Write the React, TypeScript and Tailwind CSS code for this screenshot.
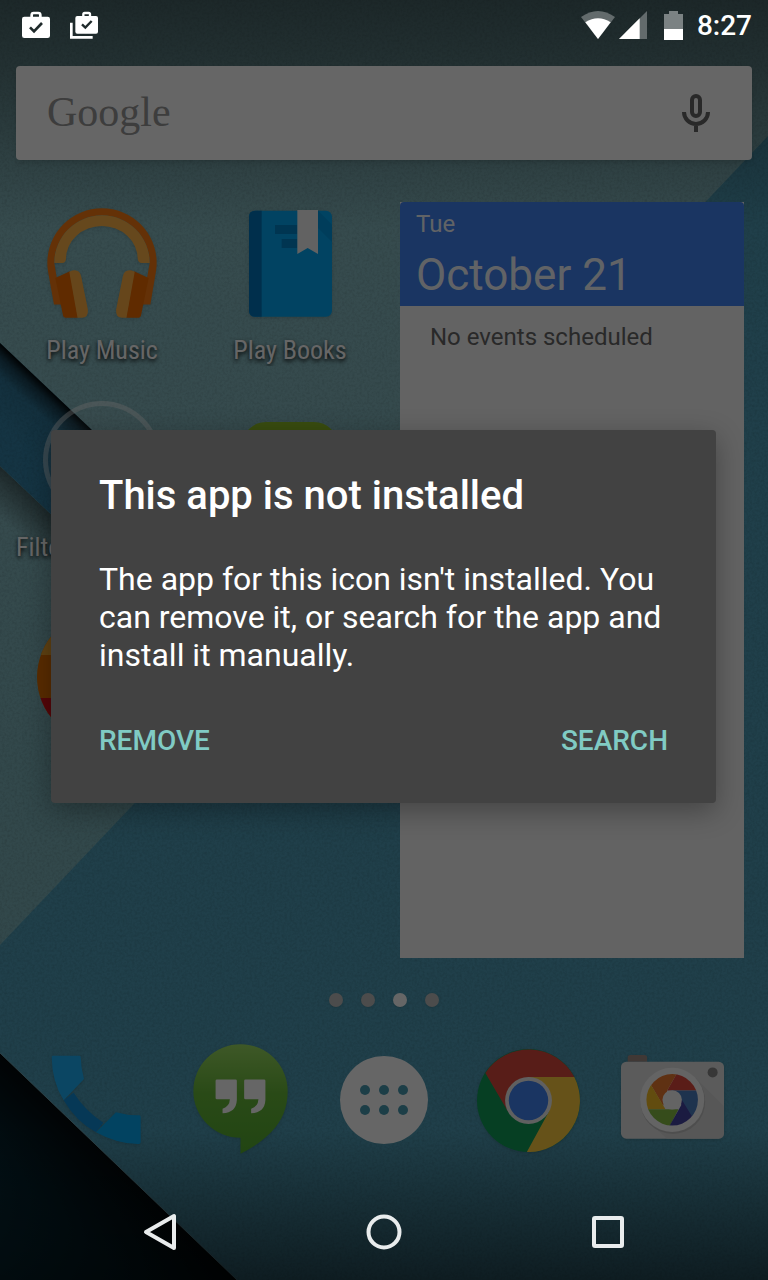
import { useState, type ReactNode } from "react";

function Wallpaper() {
  return (
    <svg
      className="absolute inset-0 h-full w-full"
      viewBox="0 0 768 1280"
      preserveAspectRatio="none"
      aria-hidden="true"
    >
      <defs>
        <linearGradient id="paper" x1="0" y1="0" x2="0.3" y2="1">
          <stop offset="0" stopColor="#8cc2c8" />
          <stop offset="0.5" stopColor="#87bac1" />
          <stop offset="0.75" stopColor="#7eb4bb" />
        </linearGradient>
        <linearGradient id="strip" gradientUnits="userSpaceOnUse" x1="0" y1="343" x2="-42" y2="388">
          <stop offset="0" stopColor="#000" stopOpacity="0.95" />
          <stop offset="0.15" stopColor="#000" stopOpacity="0.5" />
          <stop offset="0.4" stopColor="#000" stopOpacity="0.1" />
          <stop offset="1" stopColor="#000" stopOpacity="0" />
        </linearGradient>
        <linearGradient id="stripShadow" gradientUnits="userSpaceOnUse" x1="0" y1="466" x2="-26" y2="494">
          <stop offset="0" stopColor="#000" stopOpacity="0.45" />
          <stop offset="1" stopColor="#000" stopOpacity="0" />
        </linearGradient>
        <linearGradient id="corner" gradientUnits="userSpaceOnUse" x1="120" y1="1165" x2="10" y2="1280">
          <stop offset="0" stopColor="#03080b" />
          <stop offset="0.5" stopColor="#052632" />
          <stop offset="1" stopColor="#0a3d4e" />
        </linearGradient>
        <linearGradient id="topShade" x1="0" y1="0" x2="0" y2="1">
          <stop offset="0" stopColor="#000" stopOpacity="0.48" />
          <stop offset="0.3" stopColor="#000" stopOpacity="0.36" />
          <stop offset="1" stopColor="#000" stopOpacity="0" />
        </linearGradient>
        <linearGradient id="bottomShade" x1="0" y1="0" x2="0" y2="1">
          <stop offset="0" stopColor="#000" stopOpacity="0" />
          <stop offset="1" stopColor="#000" stopOpacity="0.54" />
        </linearGradient>
        <filter id="grain" x="0" y="0" width="100%" height="100%">
          <feTurbulence type="fractalNoise" baseFrequency="0.4" numOctaves="3" seed="4" />
          <feColorMatrix values="0 0 0 0 0  0 0 0 0 0  0 0 0 0 0  1.2 0 0 0 -0.45" />
        </filter>
      </defs>
      <rect width="768" height="1280" fill="#509eb8" />
      <path d="M0 0H768V136L0 945Z" fill="url(#paper)" />
      <path d="M0 466L300 750V800L0 520Z" fill="url(#stripShadow)" />
      <path d="M0 343L300 627V750L0 466Z" fill="#3583a8" />
      <path d="M0 343L300 627V750L0 466Z" fill="url(#strip)" />
      <rect width="768" height="1280" filter="url(#grain)" opacity="0.16" />
      <path d="M0 1053L237 1280H0Z" fill="url(#corner)" />
      <path d="M0 1053L237 1280" stroke="#7cb0bd" strokeWidth="1" opacity="0.8" />
      <rect width="768" height="230" fill="url(#topShade)" />
      <rect y="1130" width="768" height="150" fill="url(#bottomShade)" />
    </svg>
  );
}

function MusicIcon() {
  return (
    <svg className="h-28 w-28 drop-shadow" viewBox="0 0 337 336" aria-hidden="true">
      <path
        d="M24 290L6 190Q4 178 4 165A164.5 164.5 0 0 1 333 165Q333 178 331 190L314 290H290L312 165A143.5 143.5 0 0 0 25 165L46 290Z"
        fill="#f97c12"
      />
      <path
        d="M25 165A143.5 143.5 0 0 1 312 165H288Q278 165 276 153A108 99 0 0 0 60 153Q59 165 49 165Z"
        fill="#ffb449"
      />
      {[undefined, "translate(337 0) scale(-1 1)"].map((transform, i) => (
        <g key={i} transform={transform}>
          <path d="M28 210L72 190L96 330H62Q53 330 51 322Z" fill="#ef6c00" />
          <path d="M70 191Q100 178 106 206L126 305Q128 330 108 330H95Z" fill="#ffb044" />
        </g>
      ))}
    </svg>
  );
}

function BooksIcon() {
  return (
    <svg className="h-28 w-[86px] drop-shadow" viewBox="0 0 258 336" aria-hidden="true">
      <rect x="6" y="8" width="249" height="318" rx="18" fill="#03a9f4" />
      <path d="M44 8V326H24Q6 326 6 308V26Q6 8 24 8Z" fill="#0277bd" />
      <path d="M213 8L255 50V102L213 60Z" fill="#0288d1" opacity="0.5" />
      <path d="M84 51H151V78H84ZM104 93H151V120H104Z" fill="#0284cb" />
      <path d="M151 6H213V138L182 120L151 138Z" fill="#f5f5f5" />
    </svg>
  );
}

function PhoneIcon() {
  return (
    <svg className="h-[90px] w-[91px] drop-shadow" viewBox="0 0 273 270" aria-hidden="true">
      <path d="M38 136L68 113Q100 165 157 203L135 232Q75 200 38 136Z" fill="#0f8cd8" />
      <path d="M6 2H86Q89 2 89 7Q90 40 99 72L38 136Q3 80 2 6Q2 2 6 2Z" fill="#1cb0f8" />
      <path
        d="M135 232L195 172Q230 182 265 181Q269 181 269 186V262Q269 267 264 267Q200 268 135 232Z"
        fill="#06a8f2"
      />
    </svg>
  );
}

function HangoutsIcon() {
  const quote =
    "M72 106H128Q132 106 132 110V168Q130 206 89 208V194Q110 188 111 166H72Q68 166 68 162V110Q68 106 72 106Z";
  return (
    <svg className="mb-0.5 h-[110px] w-[95px] drop-shadow" viewBox="0 0 286 330" aria-hidden="true">
      <defs>
        <linearGradient id="bubble" x1="0" y1="0" x2="0" y2="1">
          <stop offset="0" stopColor="#9cdc62" />
          <stop offset="0.45" stopColor="#68b93a" />
          <stop offset="1" stopColor="#54ac30" />
        </linearGradient>
      </defs>
      <path
        d="M143 282A142 141 0 1 1 285 142Q285 215 235 265Q195 305 143 330Z"
        fill="url(#bubble)"
      />
      <path d={quote} fill="#fff" />
      <path d={quote} fill="#fff" transform="translate(86 0)" />
    </svg>
  );
}

function AppsIcon() {
  return (
    <svg className="h-[88px] w-[88px]" viewBox="0 0 88 88" aria-hidden="true">
      <circle cx="44" cy="44" r="44" fill="#fff" />
      {[34, 54].map((cy) =>
        [25, 44, 63].map((cx) => <circle key={`${cx}-${cy}`} cx={cx} cy={cy} r="5" fill="#489bb2" />)
      )}
    </svg>
  );
}

function ChromeIcon() {
  return (
    <svg className="h-[103px] w-[103px] drop-shadow" viewBox="0 0 308 308" aria-hidden="true">
      <circle cx="154" cy="154" r="154" fill="#0f9d58" />
      <path d="M154 84H291A154 154 0 0 1 149 308L214 189Z" fill="#ffcd40" />
      <path d="M25 72A154 154 0 0 1 291 84H154L94 189Z" fill="#dd4a3c" />
      <circle cx="154" cy="154" r="70" fill="#f1f1f1" />
      <circle cx="154" cy="154" r="59" fill="#4285f4" />
    </svg>
  );
}

function CameraIcon() {
  return (
    <svg className="mb-1.5 h-[84px] w-[103px] drop-shadow" viewBox="0 0 308 251" aria-hidden="true">
      <defs>
        <clipPath id="lens">
          <circle cx="153" cy="134" r="77" />
        </clipPath>
      </defs>
      <path d="M20 20V8Q20 0 28 0H70Q78 0 78 8V20Z" fill="#a08d86" />
      <rect y="20" width="308" height="230" rx="16" fill="#e4e4e4" />
      <circle cx="274" cy="52" r="15" fill="#8a8a8a" />
      <path d="M221 66L308 153V234Q308 250 292 250H137L85 202Z" fill="#d6d6d6" opacity="0.7" />
      <circle cx="155" cy="139" r="97" fill="#c4c4c4" />
      <circle cx="153" cy="134" r="96" fill="#fafafa" />
      <g clipPath="url(#lens)">
        <path d="M171 48H260V106H138Z" fill="#e2493c" />
        <path d="M171 48L138 106L126 152L84 80L100 40Z" fill="#ee7a30" />
        <path d="M84 80L133 162H50V90Z" fill="#f6be26" />
        <path d="M50 162H172L140 224H60Z" fill="#87bf45" />
        <path d="M138 224L180 150V122L220 192L200 240Z" fill="#4444a4" />
        <path d="M250 106H148L172 118L219 194L250 180Z" fill="#4d7fc4" />
      </g>
      <circle cx="153" cy="134" r="29" fill="#fafafa" />
    </svg>
  );
}

function HomeIcon({ label, children }: { label: string; children: ReactNode }) {
  return (
    <div className="flex flex-col items-center pt-6">
      {children}
      <p className="mt-3.5 w-full truncate text-center font-['Roboto_Condensed',Roboto,sans-serif] text-[26px] leading-8 text-white [text-shadow:0_2px_4px_#000]">
        {label}
      </p>
    </div>
  );
}

function CalendarWidget() {
  return (
    <section className="mt-[18px] mr-6 mb-2.5 ml-4 flex flex-col bg-[#f7f7f7]">
      <header className="h-[104px] rounded-t-sm bg-[#4285f4] px-4 pt-1 text-white/95">
        <p className="text-2xl leading-9">Tue</p>
        <p className="text-[44px] leading-[66px]">October 21</p>
      </header>
      <p className="px-[30px] pt-3 text-2xl leading-[38px] text-[#686868]">No events scheduled</p>
    </section>
  );
}

const DOCK = [
  { name: "Phone", icon: <PhoneIcon /> },
  { name: "Hangouts", icon: <HangoutsIcon /> },
  { name: "Apps", icon: <AppsIcon /> },
  { name: "Chrome", icon: <ChromeIcon /> },
  { name: "Camera", icon: <CameraIcon /> },
];

function HomeScreen() {
  return (
    <main className="relative flex flex-1 flex-col pt-[66px] pb-28">
      <div className="mx-4 flex h-[94px] items-center justify-between rounded-sm bg-white pr-[42px] pl-[31px] shadow-md">
        <span className="pb-0.5 font-['Liberation_Serif',serif] text-[42px] leading-[48px] text-[#989898]">
          Google
        </span>
        <button aria-label="Voice search">
          <svg className="h-[38px] w-7" viewBox="0 0 28 38" fill="none" stroke="#666" strokeWidth="4">
            <rect x="10" y="2" width="8" height="20" rx="4" />
            <path d="M2 18A12 12 0 0 0 26 18M14 30V38" />
          </svg>
        </button>
      </div>

      <div className="mt-6 grid flex-1 grid-cols-2">
        <div className="grid grid-cols-2 grid-rows-4 pl-2">
          <HomeIcon label="Play Music">
            <MusicIcon />
          </HomeIcon>
          <HomeIcon label="Play Books">
            <BooksIcon />
          </HomeIcon>
          <div className="flex flex-col items-center pt-[21px]">
            <div className="h-[118px] w-[118px] rounded-full border-[5px] border-white/40 bg-white/5" />
            <p className="mt-3 w-full pl-2 font-['Roboto_Condensed',Roboto,sans-serif] text-[26px] leading-8 text-white [text-shadow:0_2px_4px_#000]">
              Filte
            </p>
          </div>
          <div className="flex justify-center pt-[42px]">
            <div className="h-[86px] w-24 rounded-3xl bg-[#8fbf26]" />
          </div>
          <div className="flex items-center justify-center pt-1.5">
            <svg className="h-[130px] w-[130px] shrink-0" viewBox="0 0 130 130" aria-hidden="true">
              <defs>
                <clipPath id="disc">
                  <circle cx="65" cy="65" r="65" />
                </clipPath>
              </defs>
              <g clipPath="url(#disc)">
                <rect width="130" height="130" fill="#e06f00" />
                <rect width="130" height="43" fill="#f0a52e" />
                <rect y="86" width="130" height="44" fill="#d8101a" />
              </g>
            </svg>
          </div>
        </div>
        <CalendarWidget />
      </div>

      <div className="flex h-16 items-center justify-center gap-[18px]">
        {[0, 1, 2, 3].map((page) => (
          <span
            key={page}
            className={
              page === 2
                ? "h-3.5 w-3.5 rounded-full bg-white shadow"
                : "h-3.5 w-3.5 rounded-full bg-[#bdbdbd] shadow"
            }
          />
        ))}
      </div>

      <nav className="grid h-[136px] grid-cols-5 px-6">
        {DOCK.map((app) => (
          <button key={app.name} aria-label={app.name} className="flex items-center justify-center">
            {app.icon}
          </button>
        ))}
      </nav>
    </main>
  );
}

function StatusBar() {
  return (
    <div className="absolute inset-x-0 top-0 flex h-[50px] items-center justify-between pr-4 pl-[22px]">
      <div className="flex items-center gap-5">
        <svg className="h-7 w-7" viewBox="0 0 84 84" aria-hidden="true">
          <path d="M29 18V12Q29 6 35 6H49Q55 6 55 12V18" fill="none" stroke="#fff" strokeWidth="8" />
          <rect y="17" width="84" height="64" rx="7" fill="#fff" />
          <path d="M24 49L36 61L60 36" fill="none" stroke="#1f2a2b" strokeWidth="8" />
        </svg>
        <svg className="h-7 w-7" viewBox="0 0 84 84" aria-hidden="true">
          <path d="M40 18V10Q40 6 44 6H56Q60 6 60 10V18" fill="none" stroke="#fff" strokeWidth="7" />
          <rect x="16" y="15" width="68" height="53" rx="6" fill="#fff" />
          <path d="M4 35V79H68" fill="none" stroke="#fff" strokeWidth="8" />
          <path d="M36 40L46 50L65 30" fill="none" stroke="#1f2a2b" strokeWidth="7" />
        </svg>
      </div>
      <div className="flex items-center">
        <svg className="h-7 w-[34px]" viewBox="0 0 102 84" aria-hidden="true">
          <path d="M0 18Q51 -18 102 18L51 84Z" fill="#636b6c" />
          <path d="M13 34Q51 10 89 34L51 84Z" fill="#fff" />
        </svg>
        <svg className="ml-1 h-7 w-7" viewBox="0 0 84 84" aria-hidden="true">
          <path d="M84 0V84H0Z" fill="#636b6c" />
          <path d="M62 22V84H0Z" fill="#fff" />
        </svg>
        <svg className="ml-[17px] h-[29px] w-[19px]" viewBox="0 0 57 87" aria-hidden="true">
          <path d="M0 9H15V0H42V9H57V54H0Z" fill="#7b8283" />
          <path d="M0 54H57V87H0Z" fill="#fff" />
        </svg>
        <time className="ml-3.5 pt-0.5 text-[28px] leading-8 font-medium text-white">8:27</time>
      </div>
    </div>
  );
}

function NavigationBar() {
  return (
    <nav className="absolute inset-x-0 bottom-0 grid h-24 grid-cols-3 px-12">
      <button aria-label="Back" className="flex items-center justify-center">
        <svg className="h-[38px] w-[34px]" viewBox="0 0 34 38" fill="none" stroke="#e9eced" strokeWidth="4">
          <path d="M31 3V35L3 19Z" strokeLinejoin="round" />
        </svg>
      </button>
      <button aria-label="Home" className="flex items-center justify-center">
        <svg className="h-9 w-9" viewBox="0 0 36 36" fill="none" stroke="#e9eced" strokeWidth="4">
          <circle cx="18" cy="18" r="15.5" />
        </svg>
      </button>
      <button aria-label="Recent apps" className="flex items-center justify-center">
        <svg className="h-8 w-8" viewBox="0 0 32 32" fill="none" stroke="#e9eced" strokeWidth="4">
          <rect x="2" y="2" width="28" height="28" rx="1" />
        </svg>
      </button>
    </nav>
  );
}

function NotInstalledDialog({ onClose }: { onClose: () => void }) {
  return (
    <div className="absolute inset-0 flex items-center bg-black/60 pt-[49px] pr-[52px] pb-24 pl-[51px]">
      <div
        role="dialog"
        aria-labelledby="dialog-title"
        className="w-full rounded-sm bg-[#424242] px-12 pt-[42px] pb-[46px] text-white shadow-[0_8px_28px_rgba(0,0,0,0.32)]"
      >
        <h1 id="dialog-title" className="text-[40px] leading-[48px] font-medium">
          This app is not installed
        </h1>
        <p className="mt-10 text-[32px] leading-[38px]">
          The app for this icon isn't installed. You can remove it, or search for the app and
          install it manually.
        </p>
        <div className="mt-[51px] flex justify-between text-[28px] leading-8 font-medium text-[#80cbc4]">
          <button onClick={onClose}>REMOVE</button>
          <button onClick={onClose}>SEARCH</button>
        </div>
      </div>
    </div>
  );
}

export default function App() {
  const [open, setOpen] = useState(true);

  return (
    <div className="relative flex min-h-screen flex-col overflow-hidden bg-[#509eb8] font-[Roboto,sans-serif]">
      <Wallpaper />
      <HomeScreen />
      {open && <NotInstalledDialog onClose={() => setOpen(false)} />}
      <StatusBar />
      <NavigationBar />
    </div>
  );
}
